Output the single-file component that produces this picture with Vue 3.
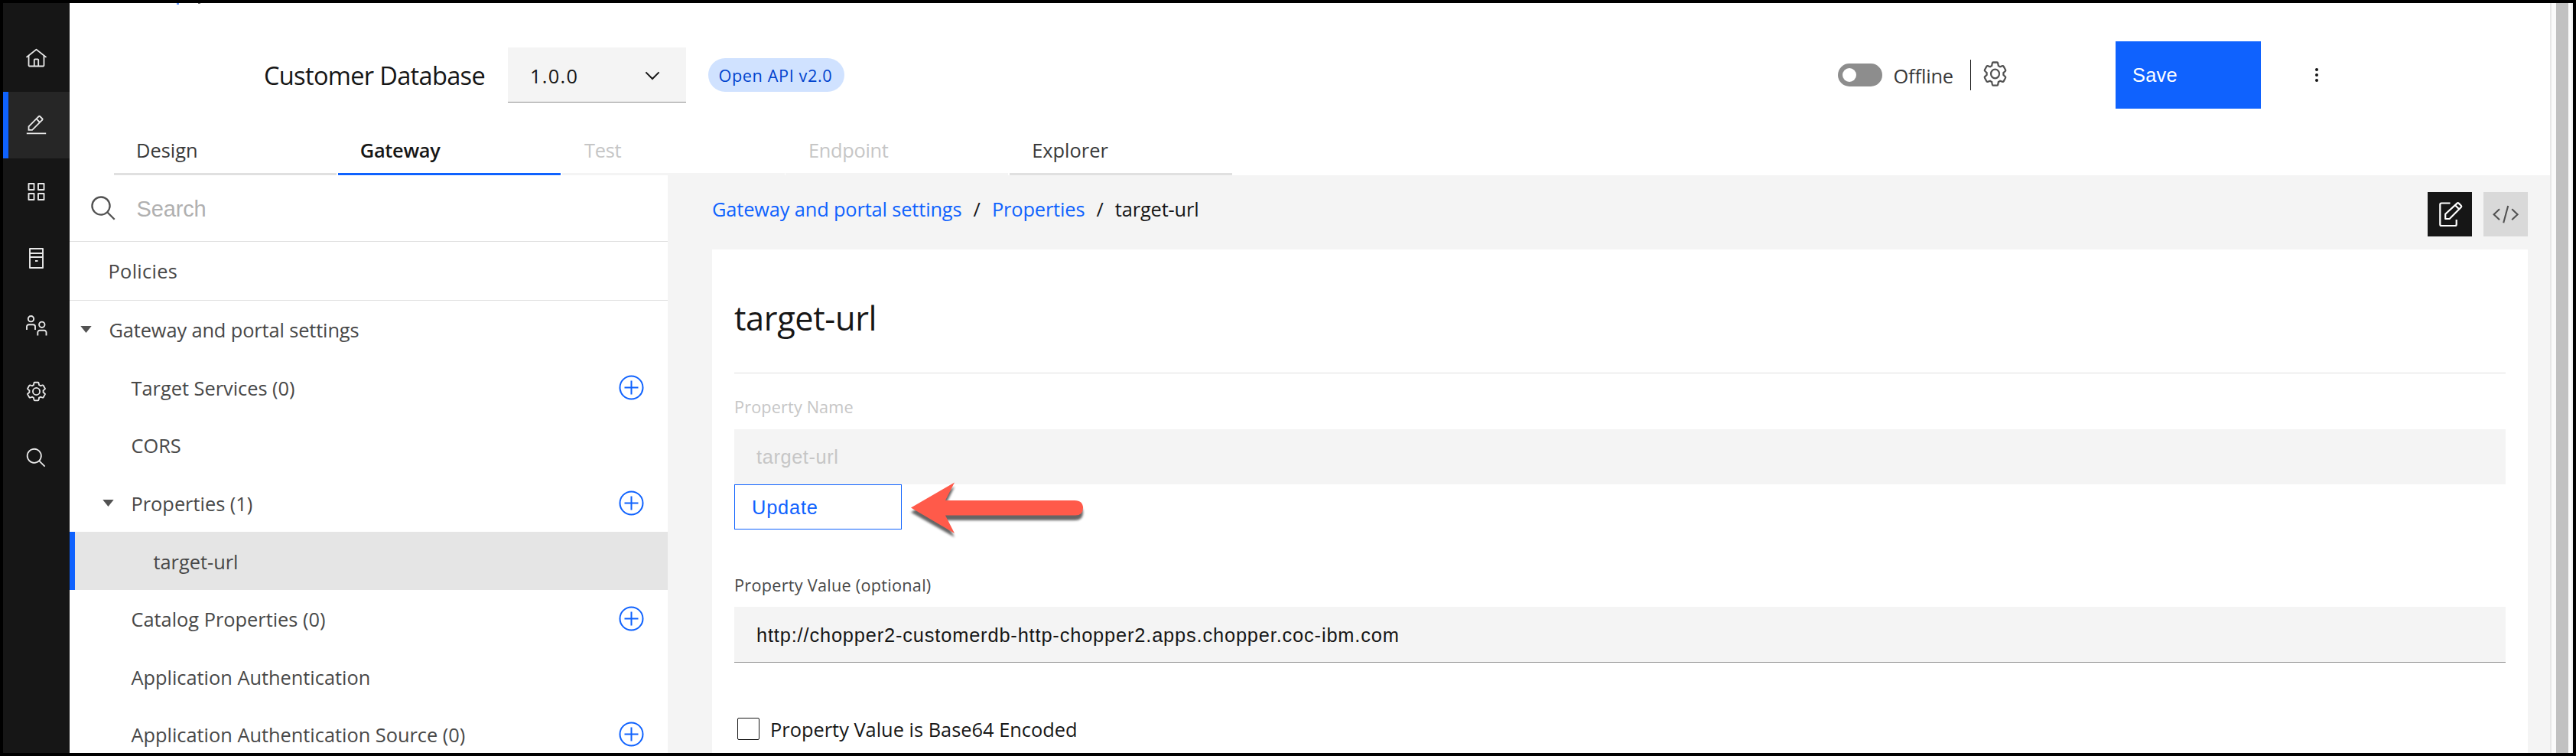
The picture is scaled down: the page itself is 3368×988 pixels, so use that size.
<script setup>
import { ref } from 'vue'

const gear =
  'M27 16.76c0-.25 0-.5 0-.76s0-.51 0-.77l1.92-1.68A2 2 0 0 0 29.3 11L26.94 7a2 2 0 0 0-1.73-1 2 2 0 0 0-.64.1l-2.43.82a11.35 11.35 0 0 0-1.31-.75l-.51-2.52a2 2 0 0 0-2-1.61H13.64a2 2 0 0 0-2 1.61l-.51 2.52a11.48 11.48 0 0 0-1.32.75L7.43 6.06A2 2 0 0 0 6.79 6 2 2 0 0 0 5.06 7L2.7 11a2 2 0 0 0 .41 2.51L5 15.24c0 .25 0 .5 0 .76s0 .51 0 .77L3.11 18.45A2 2 0 0 0 2.7 21L5.06 25a2 2 0 0 0 1.73 1 2 2 0 0 0 .64-.1l2.43-.82a11.35 11.35 0 0 0 1.31.75l.51 2.52a2 2 0 0 0 2 1.61h4.72a2 2 0 0 0 2-1.61l.51-2.52a11.48 11.48 0 0 0 1.32-.75l2.42.82a2 2 0 0 0 .64.1 2 2 0 0 0 1.73-1L29.3 21a2 2 0 0 0-.41-2.51ZM25.21 24l-3.43-1.16a8.86 8.86 0 0 1-2.71 1.57L18.36 28H13.64l-.71-3.55a9.36 9.36 0 0 1-2.7-1.57L6.79 24 4.43 20l2.72-2.4a8.9 8.9 0 0 1 0-3.13L4.43 12 6.79 8l3.43 1.16a8.86 8.86 0 0 1 2.71-1.57L13.64 4h4.72l.71 3.55a9.36 9.36 0 0 1 2.7 1.57L25.21 8 27.57 12l-2.72 2.4a8.9 8.9 0 0 1 0 3.13L27.57 20Z M16 22a6 6 0 1 1 6-6A5.94 5.94 0 0 1 16 22Zm0-10a3.91 3.91 0 0 0-4 4 3.91 3.91 0 0 0 4 4 3.91 3.91 0 0 0 4-4A3.91 3.91 0 0 0 16 12Z'
const search =
  'M29 27.586l-7.552-7.552a11.018 11.018 0 10-1.414 1.414L27.586 29zM4 13a9 9 0 119 9 9.01 9.01 0 01-9-9z'

const navItems = [
  {
    name: 'home',
    fill: 'M16.612 2.214a1.01 1.01 0 00-1.242 0L1 13.419l1.243 1.572L4 13.621V26a2.004 2.004 0 002 2h20a2.004 2.004 0 002-2V13.63L29.757 15 31 13.428zM18 26h-4v-8h4zm2 0v-8a2.002 2.002 0 00-2-2h-4a2.002 2.002 0 00-2 2v8H6V12.062l10-7.79 10 7.8V26z',
  },
  {
    name: 'develop',
    active: true,
    fill: 'M2 27h28v2H2zM25.4 9c.8-.8.8-2 0-2.8l-3.6-3.6c-.8-.8-2-.8-2.8 0l-15 15V24h6.4L25.4 9zM20.4 4L24 7.6l-3 3L17.4 7l3-3zM6 22v-3.6l10-10 3.6 3.6-10 10H6z',
  },
  {
    name: 'catalogs',
    line: 'M4.5 4h7v8h-7zM17 4h7.5v8H17zM4.5 17h7v8h-7zM17 17h7.5v8H17z',
  },
  {
    name: 'resources',
    line: 'M6 2h17v25H6zM6 8h17M6 13h17M13 18h3.5',
  },
  {
    name: 'members',
    line: 'M7.5 3a3.7 3.7 0 1 1 0 7.4a3.7 3.7 0 1 1 0-7.4M2 21v-4.2a2.6 2.6 0 0 1 2.6-2.6h5.8a2.6 2.6 0 0 1 2.6 2.6V21M21.8 10.6a3.7 3.7 0 1 1 0 7.4a3.7 3.7 0 1 1 0-7.4M16.3 28.4v-4a2.6 2.6 0 0 1 2.6-2.6h6a2.6 2.6 0 0 1 2.6 2.6v4',
    shift: true,
  },
  { name: 'settings', fill: gear },
  { name: 'search', fill: search },
]

const tabs = [
  { label: 'Design' },
  { label: 'Gateway', state: 'selected' },
  { label: 'Test', state: 'disabled' },
  { label: 'Endpoint', state: 'disabled' },
  { label: 'Explorer' },
]

const tree = [
  { label: 'Gateway and portal settings', level: 0, open: true },
  { label: 'Target Services (0)', level: 1, add: true },
  { label: 'CORS', level: 1 },
  { label: 'Properties (1)', level: 1, open: true, add: true },
  { label: 'target-url', level: 2, selected: true },
  { label: 'Catalog Properties (0)', level: 1, add: true },
  { label: 'Application Authentication', level: 1 },
  { label: 'Application Authentication Source (0)', level: 1, add: true },
]

const propertyValue = ref('http://chopper2-customerdb-http-chopper2.apps.chopper.coc-ibm.com')
</script>

<template>
  <div class="window">
    <nav class="rail">
      <div v-for="n in navItems" :key="n.name" class="rail-item" :class="{ active: n.active }">
        <svg v-if="n.fill" width="29" height="29" viewBox="0 0 32 32"><path :d="n.fill" fill="#e8e8e8" /></svg>
        <svg v-else width="29" height="29" viewBox="0 0 29 29" :class="{ shift: n.shift }">
          <path :d="n.line" fill="none" stroke="#e8e8e8" stroke-width="1.9" stroke-linejoin="round" />
        </svg>
      </div>
    </nav>

    <div class="page">
      <header class="header">
        <i class="trace trace-link"></i>
        <i class="trace trace-text"></i>
        <div class="toolbar">
          <h1 class="api-name">Customer Database</h1>
          <div class="version">
            <span>1.0.0</span>
            <svg width="20" height="12" viewBox="0 0 20 12"><path d="M1.4 1.4L10 10l8.6-8.6" fill="none" stroke="#161616" stroke-width="2" /></svg>
          </div>
          <span class="tag">Open API v2.0</span>
          <div class="toggle"><i></i></div>
          <span class="offline">Offline</span>
          <i class="divider"></i>
          <svg class="header-gear" width="35" height="37" viewBox="0 0 32 32" preserveAspectRatio="none"><path :d="gear" fill="#525252" /></svg>
          <button class="save">Save</button>
          <div class="overflow"><i></i><i></i><i></i></div>
        </div>
        <div class="tabs">
          <div v-for="t in tabs" :key="t.label" class="tab" :class="t.state">{{ t.label }}</div>
        </div>
      </header>

      <div class="body">
        <aside class="side">
          <div class="search">
            <svg width="37" height="37" viewBox="0 0 32 32"><path :d="search" fill="#525252" /></svg>
            <span>Search</span>
          </div>
          <div class="policies">Policies</div>
          <div class="tree">
            <div v-for="r in tree" :key="r.label" class="row" :class="['level-' + r.level, { selected: r.selected }]">
              <svg class="caret" width="15" height="9" viewBox="0 0 15 9"><path v-if="r.open" d="M.3 0h14.4L7.5 9z" fill="#525252" /></svg>
              <span class="row-label">{{ r.label }}</span>
              <svg v-if="r.add" class="add" width="33" height="33" viewBox="0 0 33 33">
                <circle cx="16.5" cy="16.5" r="15" fill="none" stroke="#0f62fe" stroke-width="2" />
                <path d="M16.5 7.5v18M7.5 16.5h18" stroke="#0f62fe" stroke-width="2" />
              </svg>
            </div>
          </div>
        </aside>

        <main class="main">
          <div class="crumb-bar">
            <div class="crumbs">
              <a>Gateway and portal settings</a><b>/</b><a class="crumb-short">Properties</a><b>/</b><span>target-url</span>
            </div>
            <div class="modes">
              <div class="mode form-mode">
                <svg width="58" height="58" viewBox="0 0 58 58" fill="none" stroke="#fff" stroke-width="2.2" stroke-linejoin="round">
                  <path d="M29.5 14.5H18q-1.7 0-1.7 1.7v26q0 1.8 1.7 1.8h18q1.7 0 1.7-1.8V36" />
                  <path d="M23.2 35v-6.2L38.6 14.6q1-.9 2 0l3.2 3.2q1 1 0 2L28.6 35zM36 17.2l5.2 5" />
                </svg>
              </div>
              <div class="mode code-mode">
                <svg width="58" height="58" viewBox="0 0 58 58" fill="none" stroke="#525252" stroke-width="2.1">
                  <path d="M21 22.3l-7.4 7 7.4 7M37.2 22.3l7.4 7-7.4 7M32.2 18l-6 22.3" />
                </svg>
              </div>
            </div>
          </div>

          <section class="card">
            <h2 class="card-title">target-url</h2>
            <label class="label muted">Property Name</label>
            <div class="field field-disabled">target-url</div>
            <div class="update-row">
              <button class="update">Update</button>
              <svg class="pointer" width="240" height="90" viewBox="0 0 240 90">
                <defs>
                  <filter id="soft" x="-10%" y="-20%" width="120%" height="150%"><feGaussianBlur stdDeviation="1.6" /></filter>
                </defs>
                <path class="pointer-shadow" filter="url(#soft)" d="M6 40.5L63 7l-12 24h169q11 0 11 10t-11 10H51l12 22z" />
                <path class="pointer-body" d="M6 34.5L63 1.5 51 25h169q11 0 11 10t-11 9.5H51L63 68z" />
              </svg>
            </div>
            <label class="label value-label">Property Value (optional)</label>
            <div class="field field-value">{{ propertyValue }}</div>
            <div class="check"><i></i><span>Property Value is Base64 Encoded</span></div>
          </section>
        </main>
      </div>
    </div>

    <div class="scrollbar"><i></i></div>
  </div>
</template>

<style scoped>
.window {
  box-sizing: border-box;
  width: 3368px;
  height: 988px;
  border: 4px solid #000;
  display: flex;
  background: #fff;
  overflow: hidden;
  font-family: "Open Sans", "Noto Sans", sans-serif;
  font-size: 25.4px;
  line-height: 34px;
  color: #161616;
  white-space: nowrap;
}
.window svg { display: block; flex: none; }
.rail { width: 87px; background: #161616; padding-top: 29px; box-sizing: border-box; flex: none; }
.rail-item { height: 87px; display: flex; align-items: center; justify-content: center; box-sizing: border-box; }
.rail-item.active { background: #262626; box-shadow: inset 7px 0 0 #0f62fe; }
.rail-item .shift { overflow: visible; }
.page { width: 3243px; flex: none; display: flex; flex-direction: column; }

.header { position: relative; height: 225px; flex: none; display: flex; flex-direction: column; box-sizing: border-box; padding-top: 50px; }
.trace { position: absolute; top: 0; height: 2px; width: 3px; }
.trace-link { left: 140px; background: #5c93fe; }
.trace-text { left: 168px; height: 1px; background: #6f6f6f; }
.toolbar { display: flex; align-items: center; height: 88px; padding-left: 254px; }
.api-name { margin: 0; width: 319px; font-size: 32.6px; font-weight: 400; letter-spacing: -0.69px; padding-top: 2px; }
.version { width: 233px; height: 72px; box-sizing: border-box; padding: 2px 34px 0 29px; background: #f4f4f4; border-bottom: 1px solid #8d8d8d; display: flex; align-items: center; justify-content: space-between; letter-spacing: 1.3px; }
.tag { margin-left: 29px; width: 178px; height: 44px; line-height: 45px; border-radius: 22px; box-sizing: border-box; padding-left: 13.5px; background: #d0e2ff; color: #0043ce; font-size: 21.7px; letter-spacing: 0.6px; }
.toggle { margin-left: 1299px; width: 58px; height: 30px; border-radius: 15px; background: #8d8d8d; display: flex; align-items: center; padding-left: 6px; box-sizing: border-box; }
.toggle i { width: 18px; height: 18px; border-radius: 50%; background: #fff; }
.offline { margin-left: 14.5px; width: 100.5px; color: #393939; letter-spacing: -0.15px; padding-top: 2px; }
.divider { width: 1px; height: 40px; background: #161616; }
.header-gear { margin: -4px 0 0 14px; }
.save { margin: 0 0 0 140px; width: 190px; height: 88px; border: 0; background: #0f62fe; color: #fff; text-align: left; padding: 1px 0 0 22px; font: 25.4px "Liberation Sans", Arial, sans-serif; letter-spacing: 0.25px; }
.overflow { margin-left: 70.5px; display: flex; flex-direction: column; gap: 3.4px; }
.overflow i { width: 4px; height: 4px; border-radius: 50%; background: #161616; }

.tabs { display: flex; gap: 1.8px; margin-left: 58px; }
.tab { width: 291px; height: 87px; box-sizing: border-box; border-bottom: 3px solid #e0e0e0; padding: 37px 0 0 29px; color: #393939; }
.tab.selected { border-color: #0f62fe; color: #161616; font-weight: 600; letter-spacing: -0.3px; }
.tab.disabled { border-color: #f4f4f4; color: #c6c6c6; letter-spacing: -0.3px; padding-left: 29.5px; }

.body { flex: 1; display: flex; min-height: 0; }
.side { width: 782px; background: #fff; color: #484848; flex: none; }
.search { height: 87px; box-sizing: border-box; border-bottom: 1px solid #e0e0e0; display: flex; align-items: center; padding: 1px 0 0 26px; font: 29px "Liberation Sans", Arial, sans-serif; color: #b0b0b0; letter-spacing: -0.15px; }
.search span { margin-left: 24.5px; padding-top: 1px; }
.policies { height: 77px; line-height: 77px; box-sizing: border-box; border-bottom: 1px solid #e0e0e0; padding-left: 50.5px; letter-spacing: 0.3px; }
.row { height: 75.6px; display: flex; align-items: center; box-sizing: border-box; padding: 0 31px 0 14px; }
.row.level-1 { padding-left: 43px; }
.row.level-2 { padding-left: 72px; }
.row.selected { background: #e5e5e5; box-shadow: inset 7px 0 0 #0f62fe; }
.row-label { margin-left: 22.5px; letter-spacing: -0.02px; padding-top: 1px; }
.level-0 .row-label { letter-spacing: -0.13px; }
.add { margin-left: auto; }

.main { flex: 1; background: #f4f4f4; padding: 0 29px 0 58px; display: flex; flex-direction: column; }
.crumb-bar { height: 97px; flex: none; display: flex; justify-content: space-between; box-sizing: border-box; padding-top: 22px; }
.crumbs { display: flex; padding-top: 5px; letter-spacing: -0.15px; }
.crumbs a { color: #0f62fe; }
.crumbs b { font-weight: 400; width: 39.5px; text-align: center; }
.modes { display: flex; gap: 15px; }
.mode { width: 58px; height: 58px; }
.form-mode { background: #161616; }
.code-mode { background: #d9d9d9; }

.card { flex: 1; background: #fff; padding: 0 29px; }
.card-title { margin: 0; height: 162px; box-sizing: border-box; border-bottom: 1px solid #e0e0e0; padding-top: 60px; font-size: 43.4px; line-height: 60px; font-weight: 400; letter-spacing: -0.39px; }
.label { display: block; font-size: 21.7px; line-height: 30px; color: #484848; letter-spacing: 0.25px; }
.label.muted { color: #c6c6c6; padding-top: 29px; height: 44px; letter-spacing: 0.13px; }
.field { height: 72px; line-height: 72px; box-sizing: border-box; background: #f4f4f4; padding-left: 29px; font-family: "Liberation Sans", Arial, sans-serif; letter-spacing: 0.84px; }
.field-disabled { color: #c6c6c6; letter-spacing: 0.6px; }
.update-row { position: relative; height: 59px; }
.update { width: 219px; height: 59px; box-sizing: border-box; border: 1px solid #0f62fe; background: #fff; color: #0f62fe; text-align: left; padding: 2px 0 0 22px; font: 25.4px "Liberation Sans", Arial, sans-serif; letter-spacing: 0.8px; display: block; }
.pointer { position: absolute; left: 225px; top: -4px; }
.pointer-body { fill: #ff5a4a; }
.pointer-shadow { fill: #555; opacity: 0.9; }
.value-label { padding-top: 58px; height: 43px; }
.field-value { height: 73px; border-bottom: 1px solid #8d8d8d; line-height: 74px; }
.check { display: flex; align-items: center; margin: 68.5px 0 0 4px; }
.check i { width: 29px; height: 29px; box-sizing: border-box; border: 1.5px solid #161616; border-radius: 2px; }
.check span { margin-left: 14px; padding-top: 1px; }

.scrollbar { width: 30px; box-sizing: border-box; background: #fafafa; border-left: 2px solid #e7e7e7; border-right: 2px solid #ededed; padding-left: 6px; flex: none; }
.scrollbar i { display: block; width: 16px; height: 100%; background: #c1c1c1; }
</style>

<style>
html, body { background: #000; overflow: hidden; }
</style>
